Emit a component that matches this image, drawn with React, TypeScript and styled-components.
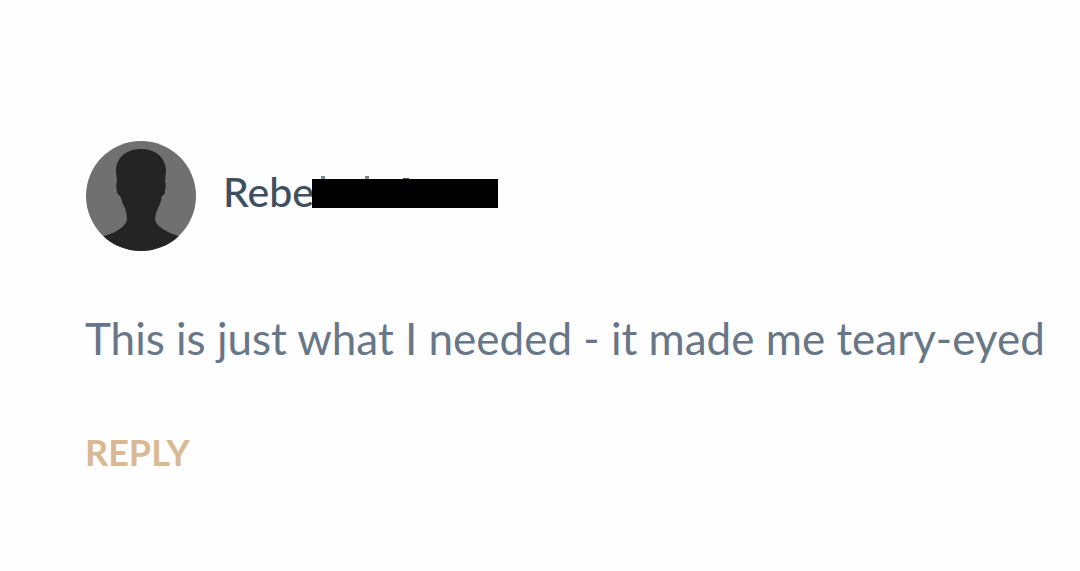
import React from 'react';
import styled, { createGlobalStyle } from 'styled-components';

const GlobalStyle = createGlobalStyle`
  body {
    margin: 0;
    background: #fefefe;
    font-family: Lato, 'Open Sans', sans-serif;
  }
`;

const Comment = styled.article`
  padding: 140px 32px 88px 85px;
`;

const Header = styled.header`
  display: flex;
  align-items: center;
  gap: 26px;
`;

const Avatar = styled.svg`
  flex: none;
  width: 112px;
  height: 112px;
`;

const Author = styled.h2`
  display: flex;
  align-items: center;
  margin: 0;
  color: #3d5062;
  font-size: 41px;
  font-weight: 500;
  line-height: 48px;
  padding-bottom: 8px;
`;

const Redaction = styled.svg`
  flex: none;
  width: 186px;
  height: 40px;
  margin-left: -2px;
`;

const Message = styled.p`
  margin: 56px 0 0;
  color: #677788;
  font-size: 44px;
  font-weight: 400;
  line-height: 60px;
`;

const Reply = styled.button`
  display: block;
  margin: 60px 0 0;
  padding: 0;
  border: 0;
  background: none;
  color: #d9b993;
  font-family: inherit;
  font-size: 36px;
  font-weight: 700;
  line-height: 48px;
  cursor: pointer;
`;

export default function App() {
  return (
    <>
      <GlobalStyle />
      <Comment>
        <Header>
          <Avatar viewBox="0 0 112 112" aria-hidden="true">
            <defs>
              <clipPath id="portrait">
                <circle cx="56" cy="56" r="55" />
              </clipPath>
            </defs>
            <g clipPath="url(#portrait)">
              <rect width="112" height="112" fill="#707070" />
              <path
                fill="#242424"
                d="M56 9C40 9 31 19 31 31L32 42C31 43 31 46 32 52C32 54 34 55 35 56C37 61 38 65 40 68C42 75 43 80 40 84C35 91 25 94 14 98V112H98V98C88 94 78 91 72 84C69 80 70 75 73 68C75 65 76 61 77 56C79 55 80 54 80 51C81 46 81 43 80 42L81 31C81 19 72 9 56 9Z"
              />
            </g>
          </Avatar>
          <Author>
            Rebe
            <Redaction viewBox="0 0 186 40" aria-hidden="true">
              <path d="M9 4h4v4H9zM53 4h4v4h-4z" fill="#7b8793" />
              <path d="M91 6h6v2h-6z" fill="#3d5062" />
              <rect y="7" width="186" height="29" fill="#000" />
            </Redaction>
          </Author>
        </Header>
        <Message>This is just what I needed - it made me teary-eyed</Message>
        <Reply type="button">REPLY</Reply>
      </Comment>
    </>
  );
}
